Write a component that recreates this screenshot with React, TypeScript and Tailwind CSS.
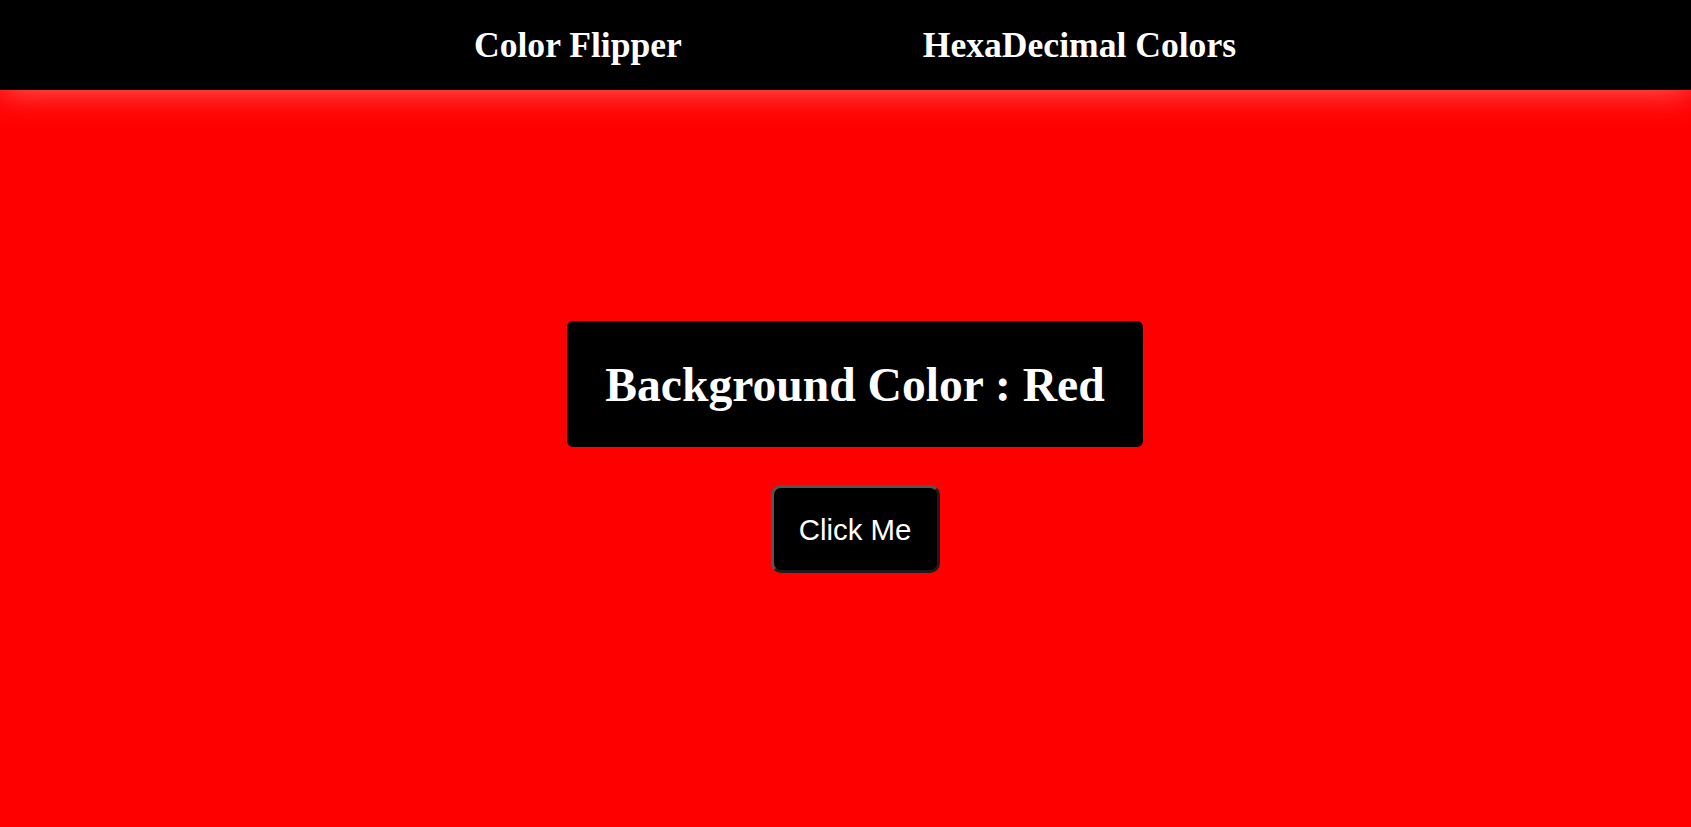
const links = ["Color Flipper", "HexaDecimal Colors"];

const App = () => {
  return (
    <div className="min-h-screen w-full bg-[#ff0000]" style={{ fontFamily: '"Liberation Serif", "Times New Roman", serif' }}>
      <nav className="relative z-10 h-[90px] w-full bg-black pl-[19px] shadow-[0_0_34px_rgba(255,255,255,0.42)]">
        <ul className="flex h-full items-center justify-center gap-[241px] pt-[2px]">
          {links.map((link) => (
            <li key={link}>
              <a href="#" className="text-[35.6px] font-bold text-white">
                {link}
              </a>
            </li>
          ))}
        </ul>
      </nav>
      <main className="flex flex-col items-center pl-[19px] pt-[231px]">
        <div className="flex h-[126px] w-[576px] items-center justify-center rounded-md bg-black pt-[4px]">
          <h1 className="text-[47.6px] font-bold text-white">Background Color : Red</h1>
        </div>
        <button
          className="mt-[38px] h-[88px] w-[169px] rounded-[10px] border-[3px] border-t-[#555] border-l-[#555] border-b-[#1c1c1c] border-r-[#1c1c1c] bg-black pt-[2px] text-[29.4px] text-white"
          style={{ fontFamily: '"Liberation Sans", Arial, sans-serif' }}
        >
          Click Me
        </button>
      </main>
    </div>
  );
};

export default App;
